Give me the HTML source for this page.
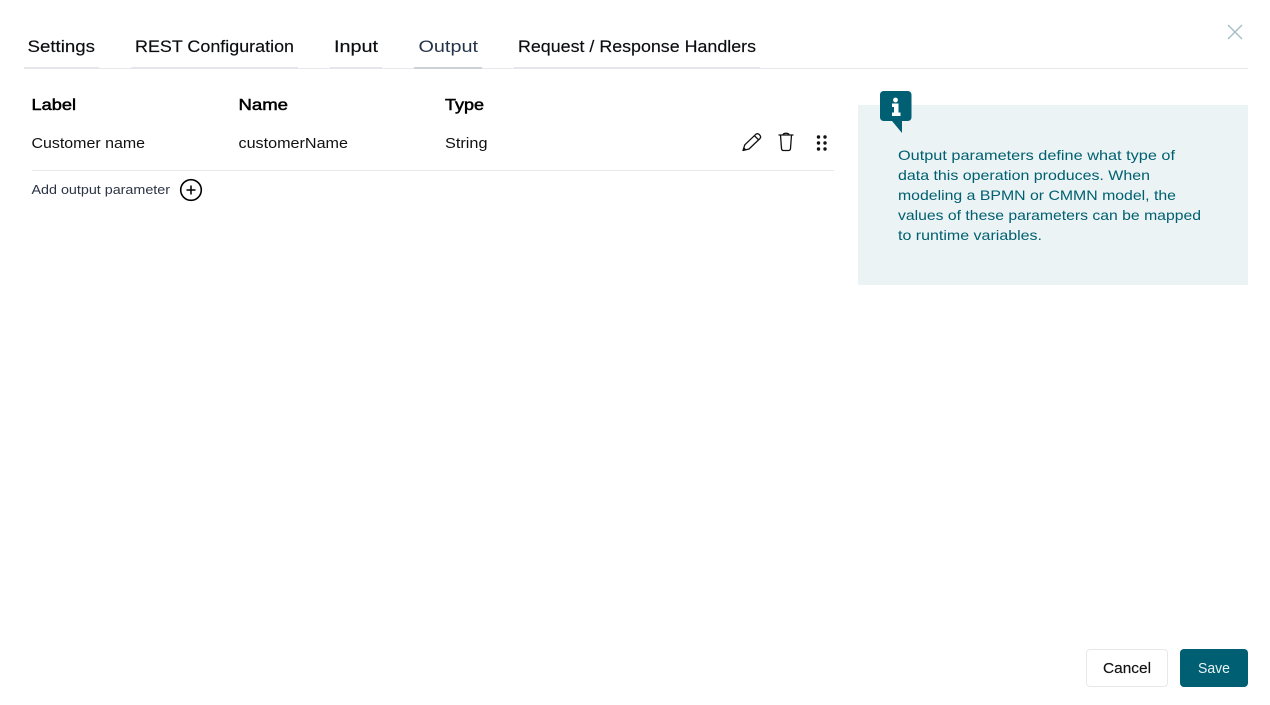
<!DOCTYPE html>
<html lang="en"><head><meta charset="utf-8"><title>Output</title>
<style>
html,body{margin:0;padding:0;background:#fff;width:1270px;height:705px;overflow:hidden}
svg{display:block}
text{font-family:"Liberation Sans",sans-serif;fill:#0b0d10}
.tab{font-size:17px;stroke:#0b0d10;stroke-width:.15px}
.th{font-size:16px;fill:#000;stroke:#000;stroke-width:.5px}
.td{font-size:14.5px;fill:#111}
.info{font-size:14px;fill:#00606f}
</style></head><body>
<svg width="1270" height="705" viewBox="0 0 1270 705" xmlns="http://www.w3.org/2000/svg">
<rect width="1270" height="705" fill="#fff"/>
<!-- tabs -->
<rect x="24" y="68" width="1224" height="1" fill="#e6e8eb"/>
<rect x="24" y="67" width="75" height="2" fill="#e4e6ea"/>
<rect x="131" y="67" width="167" height="2" fill="#e4e6ea"/>
<rect x="330" y="67" width="52" height="2" fill="#e4e6ea"/>
<rect x="414" y="67" width="68" height="2" fill="#ccd1d6"/>
<rect x="514" y="67" width="246" height="2" fill="#e4e6ea"/>
<text class="tab" x="27.500" y="52" textLength="67.500" lengthAdjust="spacingAndGlyphs">Settings</text>
<text class="tab" x="135" y="52" textLength="159" lengthAdjust="spacingAndGlyphs">REST Configuration</text>
<text class="tab" x="334" y="52" textLength="44" lengthAdjust="spacingAndGlyphs">Input</text>
<text class="tab" x="418.500" y="52" textLength="59.500" lengthAdjust="spacingAndGlyphs" style="fill:#26344a;stroke:none">Output</text>
<text class="tab" x="518" y="52" textLength="238" lengthAdjust="spacingAndGlyphs">Request / Response Handlers</text>
<!-- close -->
<path d="M1228 25L1242 39M1242 25L1228 39" stroke="#a9bfc8" stroke-width="1.5" fill="none"/>
<!-- table -->
<text class="th" x="31.500" y="110" textLength="44.500" lengthAdjust="spacingAndGlyphs">Label</text>
<text class="th" x="238.500" y="110" textLength="49.500" lengthAdjust="spacingAndGlyphs">Name</text>
<text class="th" x="445" y="110" textLength="39" lengthAdjust="spacingAndGlyphs">Type</text>
<text class="td" x="31.500" y="148" textLength="113.500" lengthAdjust="spacingAndGlyphs">Customer name</text>
<text class="td" x="238.500" y="148" textLength="109.500" lengthAdjust="spacingAndGlyphs">customerName</text>
<text class="td" x="445" y="148" textLength="42.500" lengthAdjust="spacingAndGlyphs">String</text>
<!-- pencil -->
<path d="M743 150.500L744.800 144.800L755.800 134.300C756.800 133.500 758 133.500 759 134.300L760 135.400C760.800 136.400 760.800 137.500 760 138.500L749 149ZM754.500 135.800L758.800 140" fill="none" stroke="#111" stroke-width="1.300" stroke-linejoin="round"/>
<path d="M743 150.500L744 147.300L746.300 149.500Z" fill="#111"/>
<!-- trash -->
<path d="M778.500 135H793.500M780.500 135L781.500 148.500C781.600 149.800 782.200 150.500 783.300 150.500H788.700C789.800 150.500 790.400 149.800 790.500 148.500L791.500 135M783 135C783 133.700 784 133.300 786 133.300C788 133.300 789 133.700 789 135" fill="none" stroke="#111" stroke-width="1.300" stroke-linejoin="round"/>
<!-- drag dots -->
<g fill="#111"><circle cx="818.500" cy="137" r="1.700"/><circle cx="825" cy="137" r="1.700"/><circle cx="818.500" cy="143" r="1.700"/><circle cx="825" cy="143" r="1.700"/><circle cx="818.500" cy="149" r="1.700"/><circle cx="825" cy="149" r="1.700"/></g>
<rect x="32" y="170" width="802" height="1" fill="#e6e8eb"/>
<text x="31.500" y="194" font-size="13" textLength="138.500" lengthAdjust="spacingAndGlyphs" style="fill:#2b3444">Add output parameter</text>
<circle cx="191" cy="190" r="10.300" fill="none" stroke="#000" stroke-width="1.600"/>
<path d="M186.500 190H195.500M191 185.500V194.500" stroke="#000" stroke-width="1.500" fill="none"/>
<!-- info panel -->
<rect x="858" y="105" width="390" height="180" fill="#ebf3f5"/>
<path d="M884 91H907.500C910 91 911.500 92.500 911.500 95V117C911.500 119.500 910 121 907.500 121H902V133L892 121H884C881.500 121 880 119.500 880 117V95C880 92.500 881.500 91 884 91Z" fill="#005f73"/>
<g fill="#fff"><circle cx="895.500" cy="100" r="2.400"/><path d="M892 103.500H898.500V112.500H900.500V116H892V112.500H894V107H892Z"/></g>
<text class="info" x="898" y="160" textLength="277" lengthAdjust="spacingAndGlyphs">Output parameters define what type of</text>
<text class="info" x="898" y="180" textLength="252" lengthAdjust="spacingAndGlyphs">data this operation produces. When</text>
<text class="info" x="898" y="200" textLength="278" lengthAdjust="spacingAndGlyphs">modeling a BPMN or CMMN model, the</text>
<text class="info" x="898" y="220" textLength="303" lengthAdjust="spacingAndGlyphs">values of these parameters can be mapped</text>
<text class="info" x="898" y="240" textLength="144" lengthAdjust="spacingAndGlyphs">to runtime variables.</text>
<!-- buttons -->
<rect x="1086.500" y="649.500" width="81" height="37" rx="3.500" fill="#fff" stroke="#e6e8eb"/>
<text x="1103" y="673" font-size="15" textLength="48" lengthAdjust="spacingAndGlyphs" style="fill:#111;stroke:#111;stroke-width:.15px">Cancel</text>
<rect x="1180" y="649" width="68" height="38" rx="4" fill="#005f73"/>
<text x="1198" y="673" font-size="15" textLength="32" lengthAdjust="spacingAndGlyphs" style="fill:#e8f3f5">Save</text>
</svg>
</body></html>
